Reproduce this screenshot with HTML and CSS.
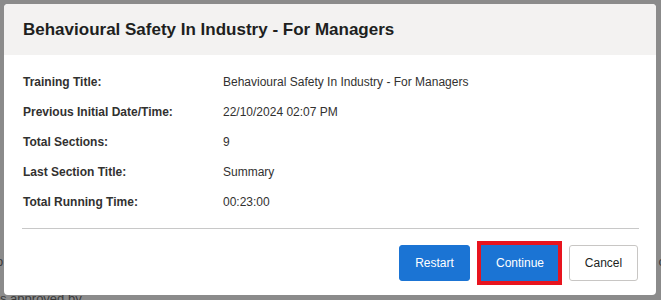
FILE: index.html
```html
<!DOCTYPE html>
<html lang="en">
<head>
    <meta charset="UTF-8" />
    <title>Resume Training</title>
    <link rel="stylesheet" href="styles.css">
</head>
<body>

    <div class="arkaplan">
        <span class="arka-sol">o</span>
        <span class="arka-sag">c</span>
        <span class="arka-alt">s approved by</span>
    </div>

    <div class="modal">
        <div class="modal-baslik">
            <h3>Behavioural Safety In Industry - For Managers</h3>
        </div>

        <div class="modal-govde">
            <div class="satir">
                <span class="etiket">Training Title:</span>
                <span class="deger">Behavioural Safety In Industry - For Managers</span>
            </div>
            <div class="satir">
                <span class="etiket">Previous Initial Date/Time:</span>
                <span class="deger">22/10/2024 02:07 PM</span>
            </div>
            <div class="satir">
                <span class="etiket">Total Sections:</span>
                <span class="deger">9</span>
            </div>
            <div class="satir">
                <span class="etiket">Last Section Title:</span>
                <span class="deger">Summary</span>
            </div>
            <div class="satir">
                <span class="etiket">Total Running Time:</span>
                <span class="deger">00:23:00</span>
            </div>
        </div>

        <div class="ayrac"></div>

        <div class="modal-alt">
            <button class="mavi">Restart</button>
            <button class="mavi secili">Continue</button>
            <button class="iptal">Cancel</button>
        </div>
    </div>

</body>
</html>
```

FILE: styles.css
```css
body {
    margin: 0;
    padding: 4px 0 0 4px;
    height: 300px;
    box-sizing: border-box;
    background: #8b8b8b;
    font-family: "Liberation Sans", Arial, sans-serif;
    position: relative;
    overflow: hidden;
}

.arkaplan span {
    position: absolute;
    font-size: 13px;
    color: #3a3a3a;
}

.arka-sol {
    left: -4px;
    top: 254px;
}

.arka-sag {
    right: -4px;
    top: 254px;
}

.arka-alt {
    left: 0;
    top: 291px;
}

.modal {
    position: relative;
    width: 652px;
    height: 291px;
    background: #ffffff;
    border-radius: 4px;
    overflow: hidden;
    display: flex;
    flex-direction: column;
}

.modal-baslik {
    background: #f3f2f1;
    height: 51px;
    padding-left: 19px;
    display: flex;
    align-items: center;
}

    .modal-baslik h3 {
        margin: 0;
        font-size: 17px;
        font-weight: bold;
        color: #201f1e;
    }

.modal-govde {
    padding: 12px 0 0 19px;
}

.satir {
    display: flex;
    height: 30px;
    align-items: center;
    font-size: 12px;
    color: #323130;
}

.etiket {
    width: 200px;
    font-weight: bold;
}

.ayrac {
    margin: 11px 17px 0 18px;
    border-top: 1px solid #c8c8c8;
}

.modal-alt {
    display: flex;
    justify-content: flex-end;
    gap: 11px;
    padding: 16px 18px 0 0;
}

button {
    height: 36px;
    padding: 0 14px;
    font-family: "Liberation Sans", Arial, sans-serif;
    font-size: 12px;
    border-radius: 3px;
    cursor: pointer;
}

.mavi {
    background-color: #1b74d4;
    border: 1px solid #1b74d4;
    color: white;
    width: 71px;
}

.secili {
    width: 77px;
    outline: 4px solid #e8141e;
    outline-offset: 0;
    border-radius: 0;
}

.iptal {
    background-color: #ffffff;
    border: 1px solid #c8c6c4;
    color: #201f1e;
    width: 69px;
}
```
